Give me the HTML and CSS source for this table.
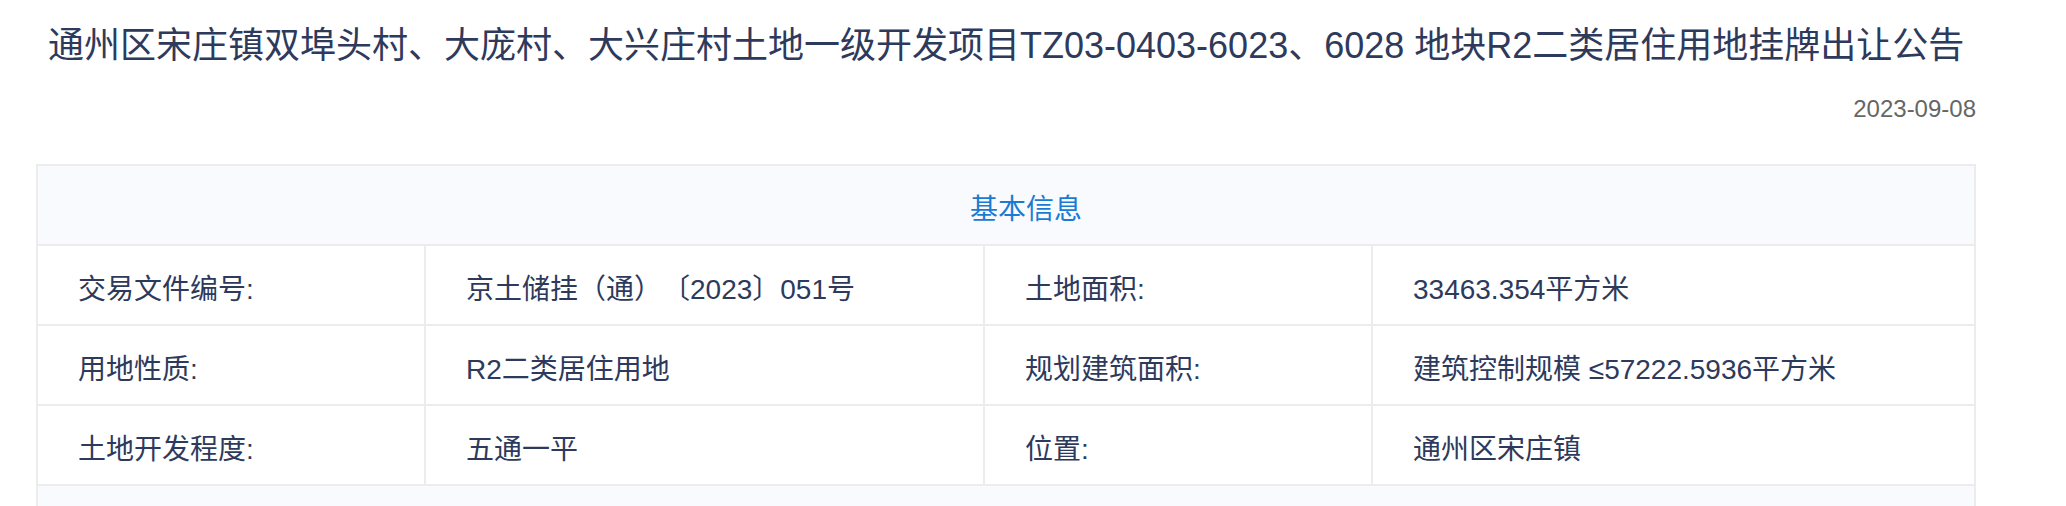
FILE: index.html
```html
<!DOCTYPE html>
<html lang="zh-CN">
<head>
<meta charset="utf-8">
<title>挂牌出让公告</title>
<link rel="stylesheet" href="styles.css">
</head>
<body>
<div class="page">
  <h1 class="title">通州区宋庄镇双埠头村、大庞村、大兴庄村土地一级开发项目TZ03-0403-6023、6028 地块R2二类居住用地挂牌出让公告</h1>
  <div class="date">2023-09-08</div>
  <div class="info">
    <div class="info-head">基本信息</div>
    <div class="cell">交易文件编号:</div>
    <div class="cell">京土储挂（通）〔2023〕051号</div>
    <div class="cell">土地面积:</div>
    <div class="cell">33463.354平方米</div>
    <div class="cell">用地性质:</div>
    <div class="cell">R2二类居住用地</div>
    <div class="cell">规划建筑面积:</div>
    <div class="cell">建筑控制规模 ≤57222.5936平方米</div>
    <div class="cell">土地开发程度:</div>
    <div class="cell">五通一平</div>
    <div class="cell">位置:</div>
    <div class="cell">通州区宋庄镇</div>
    <div class="info-head"></div>
  </div>
</div>
</body>
</html>
```
FILE: styles.css
```css
* { box-sizing: border-box; }
html, body { margin: 0; padding: 0; background: #ffffff; }
body {
  font-family: "Liberation Sans", "Noto Sans CJK SC", sans-serif;
  color: #2e3a5c;
  text-spacing-trim: space-all;
}
.page {
  width: 1976px;
  padding: 22px 0 0 36px;
}
.title {
  margin: 0;
  padding-left: 12px;
  font-size: 36px;
  line-height: 48px;
  font-weight: normal;
  color: #2e3a5c;
  white-space: nowrap;
}
.date {
  margin-top: 23px;
  text-align: right;
  font-size: 24px;
  line-height: 32px;
  color: #666666;
}
.info {
  margin-top: 39px;
  display: grid;
  grid-template-columns: 386px 557px 386px 601px;
  gap: 2px;
  background: #ececec;
  border: 2px solid #ececec;
  width: 1940px;
}
.info-head {
  grid-column: 1 / -1;
  height: 78px;
  background: #f8fafd;
  display: flex;
  align-items: center;
  justify-content: center;
  padding: 3px 0 0 40px;
  font-size: 28px;
  color: #1a7bd4;
}
.cell {
  height: 78px;
  background: #ffffff;
  display: flex;
  align-items: center;
  padding: 3px 0 0 40px;
  font-size: 28px;
  color: #2e3a5c;
  white-space: nowrap;
}
```
